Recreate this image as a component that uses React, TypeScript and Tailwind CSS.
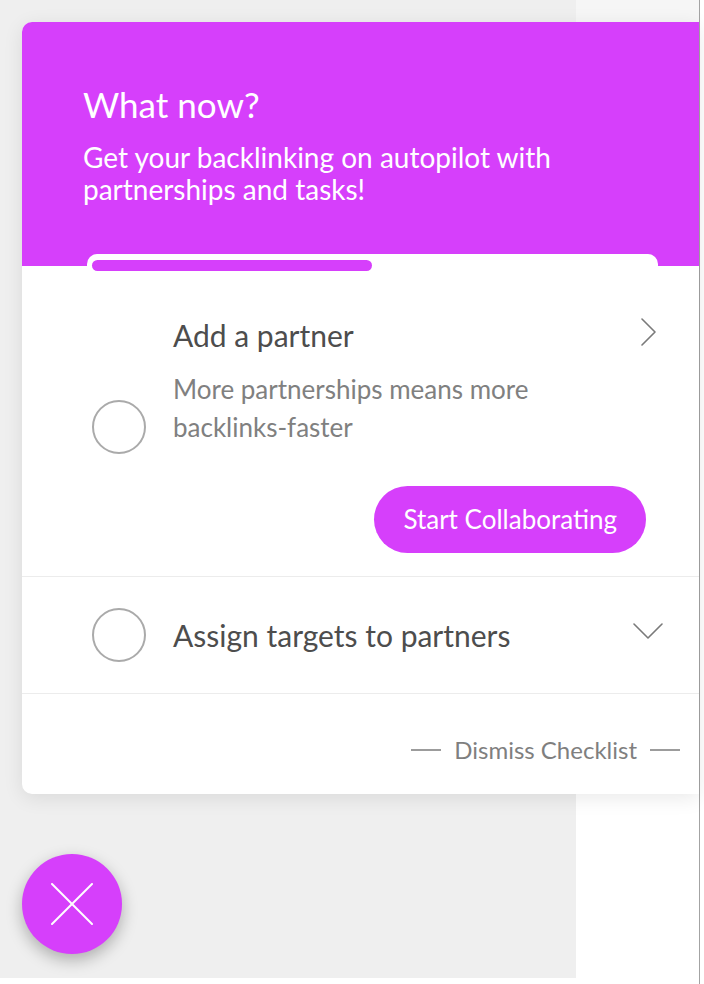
import React from "react";

const PURPLE = "bg-[#d63ffb]";

const ChevronRight = () => (
  <svg width="16" height="28" viewBox="0 0 16 28" fill="none">
    <polyline points="1,1 14,14 1,27" stroke="#7a7a7a" strokeWidth="1.6" strokeLinecap="round" strokeLinejoin="round" />
  </svg>
);

const ChevronDown = () => (
  <svg width="30" height="16" viewBox="0 0 30 16" fill="none">
    <polyline points="1,1 15,15 29,1" stroke="#7a7a7a" strokeWidth="1.6" strokeLinecap="round" strokeLinejoin="round" />
  </svg>
);

const Circle = ({ className = "" }: { className?: string }) => (
  <div className={`w-[54px] h-[54px] shrink-0 rounded-full border-2 border-[#aaaaaa] ${className}`} />
);

const App = () => {
  return (
    <div className="relative w-[704px] h-[984px] flex bg-white font-['Lato','Noto_Sans',sans-serif]">
      {/* page behind the widget */}
      <div className="w-[576px] h-[978px] bg-[#efefef]" />
      <div className="w-[123px] h-full bg-white flex flex-col">
        <div className="h-[22px] bg-[#f6f6f6]" />
      </div>
      <div className="w-px h-full bg-[#a3a3a3]" />
      <div className="flex-1 h-full bg-white" />

      {/* checklist widget */}
      <div className="absolute left-[22px] top-[22px] w-[677px] flex flex-col">
        <div className="rounded-l-[10px] bg-white shadow-[0_4px_20px_rgba(0,0,0,0.09)] overflow-hidden">
          <div className={`${PURPLE} h-[244px] flex flex-col pl-[61px] pt-[62px]`}>
            <h1 className="text-[35px] leading-[40px] text-white">What now?</h1>
            <p className="mt-[17px] text-[28px] leading-[32px] text-white w-[500px]">
              Get your backlinking on autopilot with partnerships and tasks!
            </p>
            <div className="mt-auto ml-[4px] w-[571px] h-[12px] rounded-t-[10px] bg-white pt-[6px] pl-[5px]">
              <div className={`relative z-10 w-[280px] h-[11px] rounded-full ${PURPLE}`} />
            </div>
          </div>

          {/* item 1 */}
          <div className="pt-[51px] pb-[23px] pl-[70px] pr-[42px] border-b border-[#ececec]">
            <div className="flex items-start">
              <Circle className="mt-[83px]" />
              <div className="ml-[27px] flex-1">
                <div className="text-[30px] leading-[36px] text-[#4d4d4d]">Add a partner</div>
                <div className="mt-[17px] text-[26px] leading-[38px] text-[#808080]">
                  More partnerships means more
                  <br />
                  backlinks-faster
                </div>
              </div>
              <div className="mt-[1px]">
                <ChevronRight />
              </div>
            </div>
            <div className="mt-[32px] flex justify-end pr-[11px]">
              <button className={`${PURPLE} h-[67px] px-[29px] rounded-full text-white text-[26px]`}>
                Start Collaborating
              </button>
            </div>
          </div>

          {/* item 2 */}
          <div className="h-[117px] flex items-center pl-[70px] pr-[36px] border-b border-[#ececec]">
            <Circle />
            <div className="ml-[27px] flex-1 text-[30px] leading-[36px] text-[#4d4d4d]">
              Assign targets to partners
            </div>
            <div className="mb-[8px]">
              <ChevronDown />
            </div>
          </div>

          {/* footer */}
          <div className="h-[100px] pt-[12px] flex items-center justify-end pr-[19px] gap-[13px]">
            <div className="w-[30px] h-[1.5px] bg-[#9c9c9c]" />
            <span className="text-[24px] text-[#7f7f7f]">Dismiss Checklist</span>
            <div className="w-[30px] h-[1.5px] bg-[#9c9c9c]" />
          </div>
        </div>

        <button className={`mt-[60px] w-[100px] h-[100px] rounded-full ${PURPLE} flex items-center justify-center shadow-[0_6px_16px_rgba(0,0,0,0.28)]`}>
          <svg width="42" height="42" viewBox="0 0 42 42" fill="none">
            <line x1="1" y1="1" x2="41" y2="41" stroke="white" strokeWidth="2" strokeLinecap="round" />
            <line x1="41" y1="1" x2="1" y2="41" stroke="white" strokeWidth="2" strokeLinecap="round" />
          </svg>
        </button>
      </div>
    </div>
  );
};

export default App;
